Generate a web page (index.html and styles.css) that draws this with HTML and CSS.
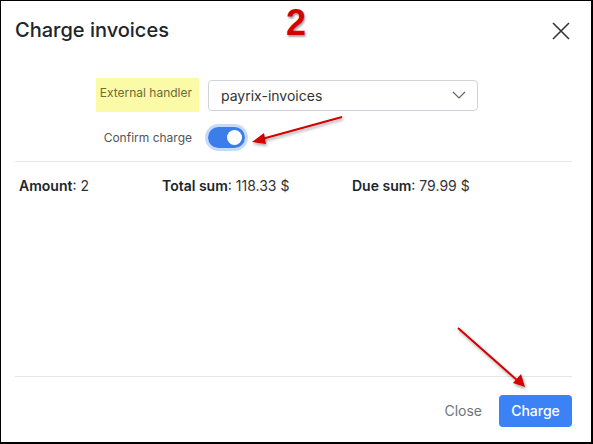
FILE: index.html
```html
<!DOCTYPE html>
<html>
<head>
<meta charset="utf-8">
<link rel="stylesheet" href="styles.css">
</head>
<body>
<div class="modal">
  <div class="header">
    <h1 class="title">Charge invoices</h1>
    <span class="step">2</span>
    <svg class="close-x" width="18" height="18" viewBox="0 0 18 18"><path d="M1 1L17 17M17 1L1 17" stroke="#333" stroke-width="1.6" fill="none"/></svg>
  </div>
  <div class="form">
    <div class="row">
      <div class="label"><span class="hl">External handler</span></div>
      <div class="select">
        <span>payrix-invoices</span>
        <svg width="14" height="8" viewBox="0 0 14 8"><path d="M1 1L7 7L13 1" stroke="#666" stroke-width="1.2" fill="none"/></svg>
      </div>
    </div>
    <div class="row row2">
      <div class="label">Confirm charge</div>
      <div class="toggle-ring"><div class="toggle"><div class="knob"></div></div></div>
    </div>
  </div>
  <div class="stats">
    <span class="stat"><b>Amount</b>: 2</span>
    <span class="stat s2"><b>Total sum</b>: 118.33 $</span>
    <span class="stat s3"><b>Due sum</b>: 79.99 $</span>
  </div>
  <div class="spacer"></div>
  <div class="footer">
    <button class="btn-close">Close</button>
    <button class="btn-charge">Charge</button>
  </div>
  <svg class="arrows" width="593" height="444" viewBox="0 0 593 444">
    <defs>
      <filter id="sh" x="-20%" y="-20%" width="140%" height="140%"><feDropShadow dx="1" dy="2" stdDeviation="1.5" flood-color="#000" flood-opacity="0.35"/></filter>
    </defs>
    <g filter="url(#sh)" stroke="#d40000" fill="#d40000">
      <line x1="342" y1="117" x2="262" y2="139" stroke-width="2"/>
      <polygon points="252,142 264,133 266,144" stroke="none"/>
      <line x1="458" y1="328" x2="518" y2="381" stroke-width="2"/>
      <polygon points="525,387 513,383 521,374" stroke="none"/>
    </g>
  </svg>
</div>
</body>
</html>
```
FILE: styles.css
```css
* { box-sizing: border-box; }
html, body { margin: 0; padding: 0; background: #fff; }
body { font-family: Inter, "Noto Sans", sans-serif; color: #333; }
.modal {
  position: relative;
  width: 593px; height: 444px;
  border-style: solid; border-color: #000;
  border-width: 1px 2px 2px 1px;
  display: flex; flex-direction: column;
  padding: 0 19px 0 14px;
}
.header { display: flex; align-items: center; height: 58px; position: relative; }
.title { margin: 0; font-size: 20px; font-weight: 500; color: #212529; flex: 1; }
.step {
  position: absolute; left: 271px; top: 1px;
  font: bold 36px "Liberation Sans", Arial, sans-serif; color: #d40000;
  text-shadow: 1px 2px 2px rgba(0,0,0,0.35);
}
.close-x { margin-right: 2px; margin-top: 1px; }
.form { padding-top: 19px; padding-bottom: 10px; border-bottom: 1px solid #e6e6e6; }
.row { display: flex; align-items: center; gap: 16px; }
.row2 { margin-top: 11px; height: 28px; gap: 13px; }
.label { width: 177px; text-align: right; font-size: 12px; color: #555; }
.hl { background: #fbfaa6; display: inline-block; padding: 7px 7px 12px 4px; margin-right: -7px; color: #6e6a3a; }
.select {
  width: 270px; height: 31px; border: 1px solid #d0d4d9; border-radius: 4px;
  display: flex; align-items: center; justify-content: space-between;
  padding: 0 11px 0 12px; font-size: 14px; color: #333;
}
.toggle-ring { padding: 3px; border-radius: 14px; background: #c7dafb; }
.toggle { width: 37px; height: 21px; border-radius: 11px; background: #3b7de9; position: relative; }
.knob { position: absolute; right: 3px; top: 3px; width: 15px; height: 15px; border-radius: 50%; background: #fff; }
.stats { display: flex; font-size: 14px; color: #333; padding: 15px 0 0 4px; }
.stat b { font-weight: 600; color: #212529; }
.stat { width: 143px; }
.s3 { width: auto; }
.s2 { width: 190px; }
.spacer { flex: 1; border-bottom: 1px solid #e6e6e6; }
.footer { display: flex; justify-content: flex-end; align-items: center; height: 65px; padding-top: 2px; }
.btn-close { background: none; border: none; font: 14px Inter, sans-serif; color: #6c757d; padding: 0 17px 0 0; }
.btn-charge {
  background: #3b82f6; color: #fff; border: none; border-radius: 4px;
  font: 500 14px Inter, sans-serif; width: 73px; height: 32px;
}
.arrows { position: absolute; left: -1px; top: -1px; pointer-events: none; }
```
